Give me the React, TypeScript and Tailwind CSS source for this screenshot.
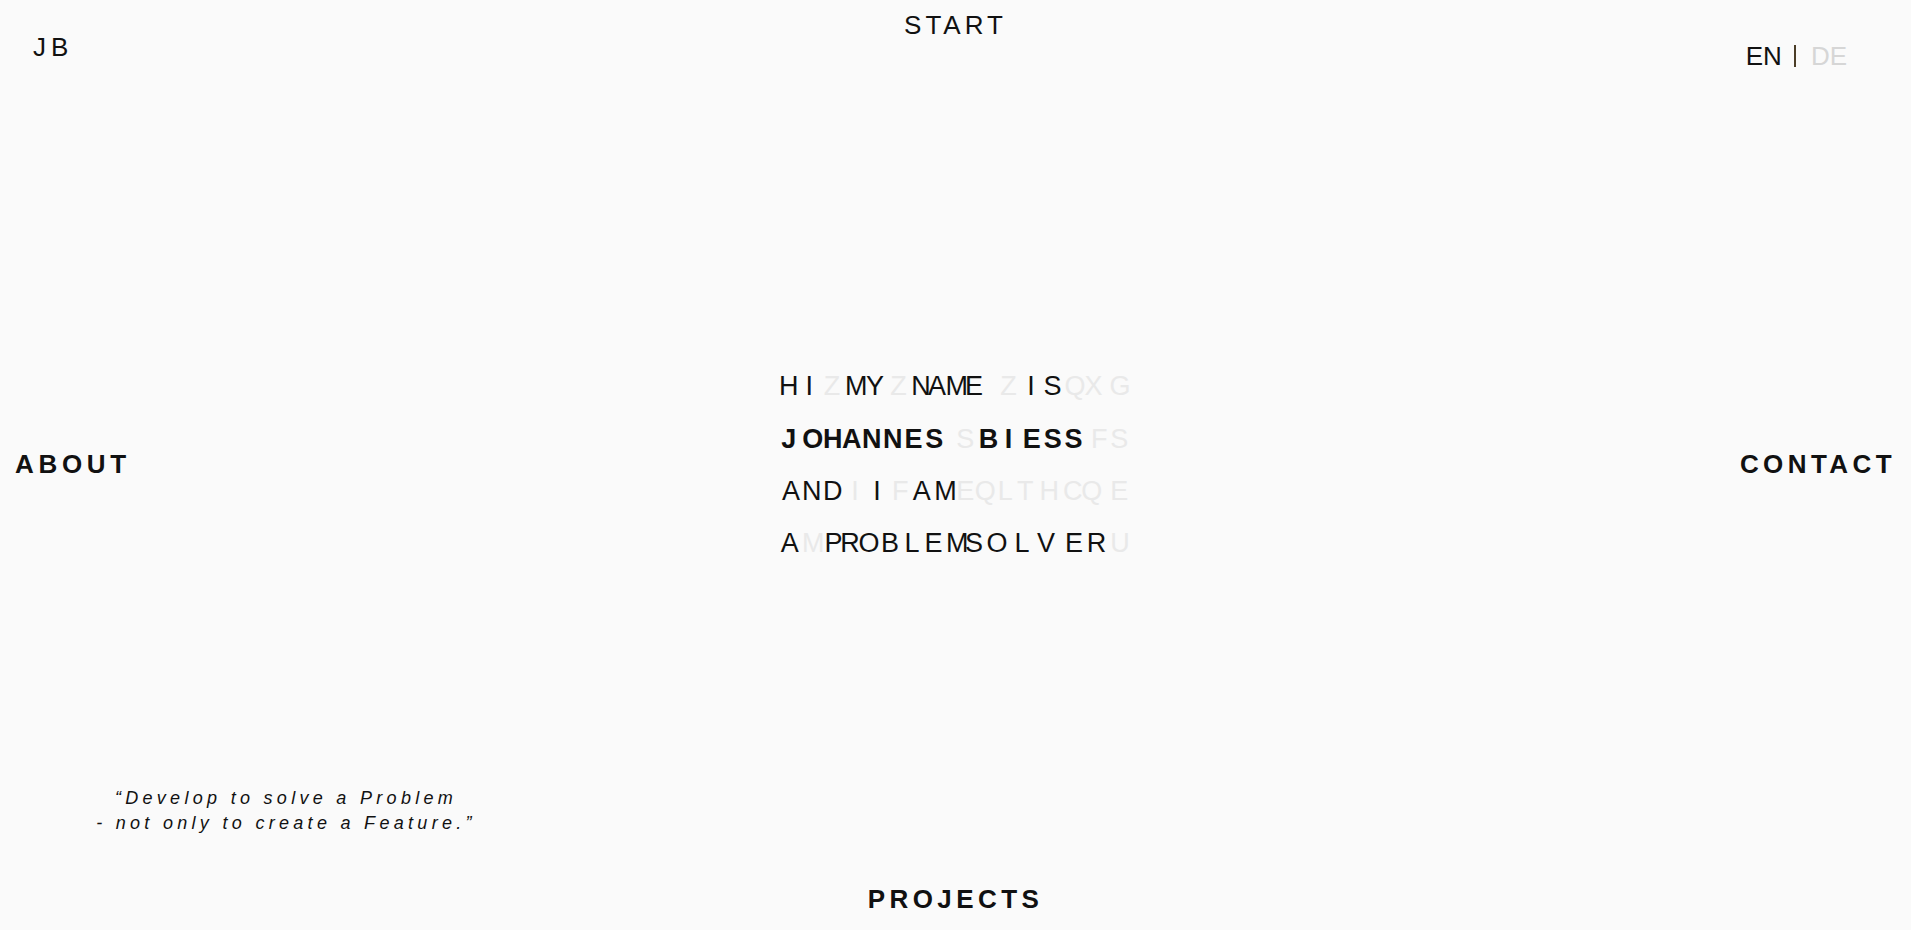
import clsx from "clsx"

// letter grid: each row is 16 cells of 22px, x = measured centre of every letter
const ROWS = [
  {
    text: "HIZMYZNAMEZISQXG",
    on: "1101101111011000",
    bold: false,
    x: [788.7, 809.3, 832, 856, 875, 898.5, 921, 937, 956.5, 974, 1008.5, 1031, 1052.5, 1075, 1093.5, 1120],
  },
  {
    text: "JOHANNESSBIESSFS",
    on: "1111111101111100",
    bold: true,
    x: [788.8, 812.7, 832.7, 851.8, 871.8, 892.7, 913.5, 934.3, 965.2, 988.5, 1008.5, 1031.8, 1052.7, 1073.5, 1099.3, 1119.3],
  },
  {
    text: "ANDIIFAMEQLTHCQE",
    on: "1110101100000000",
    bold: false,
    x: [791, 811.8, 832.7, 855, 877, 900.2, 921.8, 945.2, 965.2, 985.2, 1005.2, 1025.2, 1049.3, 1072.7, 1091.8, 1119.3],
  },
  {
    text: "AMPROBLEMSOLVERU",
    on: "1011111111111110",
    bold: false,
    x: [789.7, 813, 833.5, 850, 869, 890, 912, 933.5, 957, 974, 997, 1022, 1046, 1074, 1096.5, 1120],
  },
]

const GRID_LEFT = (1911 - 16 * 22) / 2

function LetterGrid() {
  return (
    <div className="flex flex-col text-[27px] leading-[52.3px]">
      {ROWS.map((row, r) => (
        <div key={r} className="flex">
          {row.text.split("").map((ch, i) => {
            const on = row.on[i] === "1"
            const dx = row.x[i] - (GRID_LEFT + 11 + 22 * i)
            return (
              <span
                key={i}
                className={clsx(
                  "inline-block w-[22px] text-center",
                  on ? "text-[#111]" : "text-[#e9e9e9]",
                  on && row.bold && "font-bold"
                )}
                style={{ transform: `translateX(${dx}px)` }}
              >
                {ch}
              </span>
            )
          })}
        </div>
      ))}
    </div>
  )
}

export default function App() {
  return (
    <div className="grid h-screen w-full grid-rows-[1fr_auto_1fr] bg-[#fafafa] font-['Liberation_Sans',Arial,sans-serif] text-[#111]">

      {/* Top bar */}
      <header className="grid grid-cols-[1fr_auto_1fr] items-start">
        <a className="justify-self-start pl-[33px] pt-[34px] text-[26px] leading-none tracking-[5px]">JB</a>
        <a className="pt-[12px] text-[26px] leading-none tracking-[4px]">START</a>
        <div className="flex items-center justify-self-end pr-[64px] pt-[43px] text-[26px] leading-none">
          <span>EN</span>
          <span className="ml-[12px] mr-[15px] h-[22px] w-[2px] bg-[#4b3d27]" />
          <span className="text-[#d6d6d6]">DE</span>
        </div>
      </header>

      {/* Middle */}
      <main className="grid grid-cols-[1fr_auto_1fr] items-center">
        <a className="justify-self-start pb-[3px] pl-[15px] text-[26px] font-bold leading-none tracking-[0.18em]">
          ABOUT
        </a>
        <LetterGrid />
        <a className="justify-self-end pb-[3px] pr-[15px] text-[26px] font-bold leading-none tracking-[0.17em]">
          CONTACT
        </a>
      </main>

      {/* Bottom */}
      <footer className="flex flex-col justify-end">
        <p className="mb-[51px] w-[572px] text-center text-[18px] italic leading-[24.5px] tracking-[4.3px]">
          “Develop to solve a Problem
          <br />
          - not only to create a Feature.”
        </p>
        <a className="pb-[18px] text-center text-[26px] font-bold leading-none tracking-[0.17em]">PROJECTS</a>
      </footer>
    </div>
  )
}
